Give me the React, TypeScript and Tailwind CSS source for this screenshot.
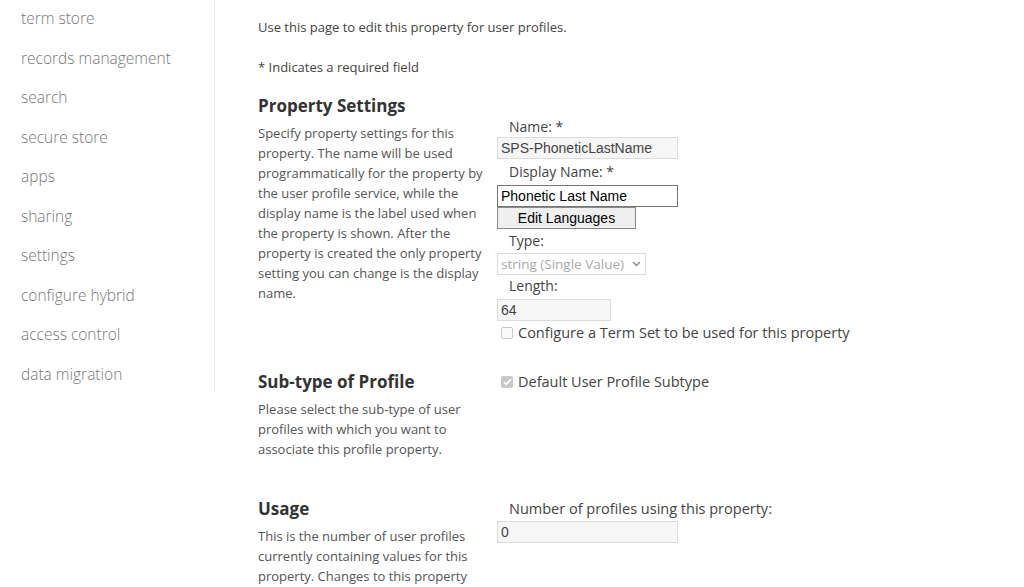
import React from "react";

const navItems = [
  "term store",
  "records management",
  "search",
  "secure store",
  "apps",
  "sharing",
  "settings",
  "configure hybrid",
  "access control",
  "data migration",
];

const ui = "font-['Segoe_UI','Open_Sans',sans-serif]";
const arial = "font-['Liberation_Sans',Arial,sans-serif]";

function Label({ children }: { children: React.ReactNode }) {
  return <div className={`${ui} pl-3 text-[14px] leading-[18px] text-[#444]`}>{children}</div>;
}

function TextBox({ value, width, active }: { value: string; width: string; active?: boolean }) {
  return (
    <div
      className={`${arial} ${width} h-[22px] border px-[3px] text-[14px] leading-[20px] ${
        active ? "border-[#767676] bg-white text-black" : "border-[#dcdcdc] bg-[#f6f6f6] text-[#444]"
      }`}
    >
      {value}
    </div>
  );
}

function Section({
  title,
  desc,
  children,
  className,
  rightPad,
}: {
  title: string;
  desc: string;
  children: React.ReactNode;
  className?: string;
  rightPad?: string;
}) {
  return (
    <div className={`grid grid-cols-[239px_1fr] ${className ?? ""}`}>
      <div>
        <h2 className={`${ui} text-[17px] font-bold leading-[24px] text-[#333]`}>{title}</h2>
        <p className={`${ui} mt-[5px] w-[230px] text-[13px] leading-[20px] text-[#555]`}>{desc}</p>
      </div>
      <div className={rightPad ?? "pt-[3px]"}>{children}</div>
    </div>
  );
}

export default function App() {
  return (
    <div className="flex h-[587px] w-[1024px] overflow-hidden bg-white">
      <nav className="h-[393px] w-[215px] shrink-0 border-r border-[#ebebeb] pl-[21px] pt-[7px]">
        {navItems.map((item) => (
          <div key={item} className={`${ui} h-[39.5px] text-[15.5px] font-light leading-[22px] text-[#777]`}>
            {item}
          </div>
        ))}
      </nav>

      <main className="pl-[43px] pt-[18px]">
        <p className={`${ui} text-[13px] leading-[18px] text-[#444]`}>
          Use this page to edit this property for user profiles.
        </p>
        <p className={`${ui} mt-[22px] text-[13px] leading-[18px] text-[#444]`}>* Indicates a required field</p>

        <Section
          className="mt-[18px]"
          rightPad="pt-[24px]"
          title="Property Settings"
          desc="Specify property settings for this property. The name will be used programmatically for the property by the user profile service, while the display name is the label used when the property is shown. After the property is created the only property setting you can change is the display name."
        >
          <div className="flex flex-col">
            <Label>Name: *</Label>
            <div className="mt-px">
              <TextBox value="SPS-PhoneticLastName" width="w-[181px]" />
            </div>
            <div className="mt-[4px]">
              <Label>Display Name: *</Label>
            </div>
            <div className="mt-[4px]">
              <TextBox value="Phonetic Last Name" width="w-[181px]" active />
            </div>
            <button
              className={`${arial} h-[22px] w-[139px] border border-[#8a8a8a] bg-[#efefef] text-center text-[14px] leading-[18px] text-black`}
            >
              Edit Languages
            </button>
            <div className="mt-[3px]">
              <Label>Type:</Label>
            </div>
            <div
              className={`${ui} mt-[3px] flex h-[22px] w-[149px] items-center justify-between border border-[#dcdcdc] pl-[3px] pr-[4px] text-[13.5px] text-[#aaa]`}
            >
              <span>string (Single Value)</span>
              <svg width="9" height="6" viewBox="0 0 9 6" fill="none">
                <path d="M1 1l3.5 3.5L8 1" stroke="#888" strokeWidth="1.3" />
              </svg>
            </div>
            <div className="mt-[2px]">
              <Label>Length:</Label>
            </div>
            <div className="mt-[4px]">
              <TextBox value="64" width="w-[114px]" />
            </div>
            <div className="mt-[2px] flex items-center gap-[5px] pl-[4px]">
              <span className="h-[12px] w-[12px] rounded-[2px] border border-[#c8c8c8] bg-[#fafafa]" />
              <span className={`${ui} text-[14.5px] leading-[20px] text-[#444]`}>
                Configure a Term Set to be used for this property
              </span>
            </div>
          </div>
        </Section>

        <Section
          className="mt-[27px]"
          rightPad="pt-[2px]"
          title="Sub-type of Profile"
          desc="Please select the sub-type of user profiles with which you want to associate this profile property."
        >
          <div className="flex items-center gap-[5px] pl-[4px]">
            <span className="flex h-[12px] w-[12px] items-center justify-center rounded-[2px] bg-[#c9c9c9]">
              <svg width="9" height="8" viewBox="0 0 9 8" fill="none">
                <path d="M1 4l2.3 2.3L8 1.2" stroke="#fff" strokeWidth="1.6" />
              </svg>
            </span>
            <span className={`${ui} text-[14.5px] leading-[20px] text-[#444]`}>Default User Profile Subtype</span>
          </div>
        </Section>

        <Section
          className="mt-[38px]"
          rightPad="pt-[3px]"
          title="Usage"
          desc="This is the number of user profiles currently containing values for this property. Changes to this property"
        >
          <div className="flex flex-col">
            <div className={`${ui} pl-3 text-[14.5px] leading-[18px] text-[#444]`}>
              Number of profiles using this property:
            </div>
            <div className="mt-[3px]">
              <TextBox value="0" width="w-[181px]" />
            </div>
          </div>
        </Section>
      </main>
    </div>
  );
}
